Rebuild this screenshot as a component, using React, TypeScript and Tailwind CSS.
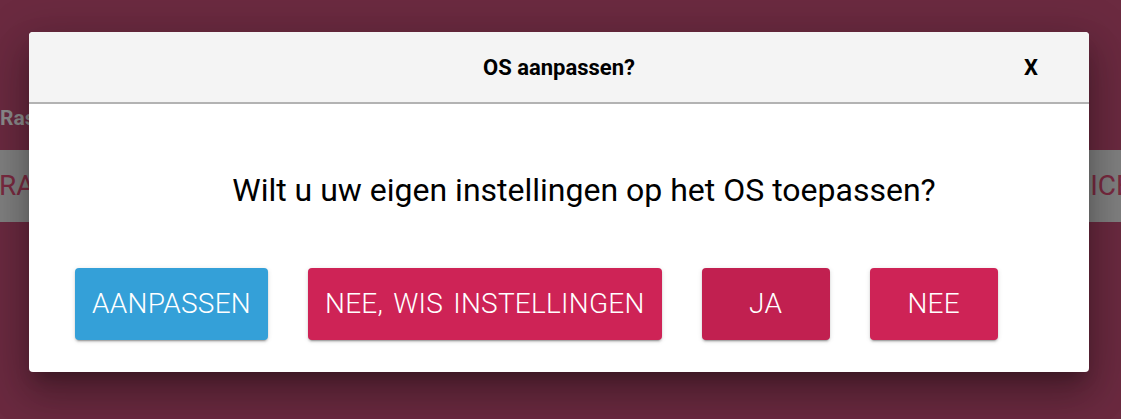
import React from 'react';

const btn =
    'h-[72px] min-w-[128px] rounded-[4px] px-[17px] text-[28px] font-light tracking-[0.25px] [word-spacing:3px] text-white shadow-[0_3px_1px_-2px_rgba(0,0,0,0.2),0_2px_2px_0_rgba(0,0,0,0.14),0_1px_5px_0_rgba(0,0,0,0.12)]';

export default function App() {
    return (
        <div className="relative h-[419px] w-full overflow-hidden bg-[#6b2a40] font-['Roboto',sans-serif]">
            {/* page behind the dialog */}
            <div className="pt-[104px]">
                <p className="text-[21px] font-bold text-[#8c8c8c] leading-[28px]">Raspberry</p>
                <div className="mt-[18px] flex h-[72px] items-center justify-between bg-[#808080] text-[28px] text-[#7a2a40]">
                    <span className="-ml-[1px]">RASP</span>
                    <span className="-mr-[11px]">ICE</span>
                </div>
            </div>

            {/* dialog */}
            <div className="absolute left-[29px] top-[32px] w-[1060px] overflow-hidden rounded-[4px] bg-white shadow-[0_11px_15px_-7px_rgba(0,0,0,0.25),0_24px_38px_3px_rgba(0,0,0,0.18),0_9px_46px_8px_rgba(0,0,0,0.16)]">
                <div className="grid h-[72px] grid-cols-[1fr_auto_1fr] items-center border-b-2 border-[#b3b3b3] bg-[#f4f4f4]">
                    <div />
                    <h2 className="text-[22px] font-bold text-black">OS aanpassen?</h2>
                    <div className="flex justify-end pr-[51px]">
                        <span className="text-[22px] font-bold text-black">X</span>
                    </div>
                </div>
                <div className="pl-[50px] pt-[70px] text-center text-[32px] leading-none text-black">
                    Wilt u uw eigen instellingen op het OS toepassen?
                </div>
                <div className="flex gap-10 pl-[46px] pt-[62px] pb-[32px]">
                    <button className={btn + ' bg-[#34a0d8]'}>AANPASSEN</button>
                    <button className={btn + ' bg-[#ce2356]'}>NEE, WIS INSTELLINGEN</button>
                    <button className={btn + ' bg-[#c12050]'}>JA</button>
                    <button className={btn + ' bg-[#ce2356]'}>NEE</button>
                </div>
            </div>
        </div>
    );
}
